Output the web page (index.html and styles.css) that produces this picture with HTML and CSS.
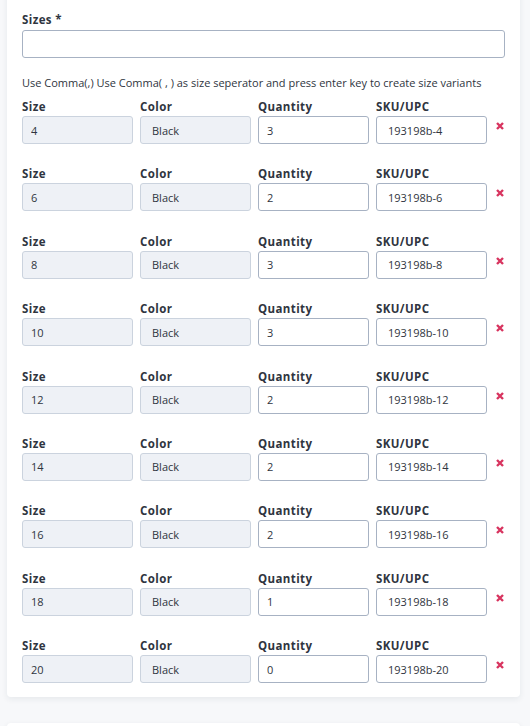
FILE: index.html
```html
<!DOCTYPE html>
<html>
<head>
<meta charset="utf-8">
<link rel="stylesheet" href="styles.css">
</head>
<body>
<div class="card">
  <div class="field">
    <label class="label">Sizes *</label>
    <input class="input sizes" type="text">
  </div>
  <p class="hint">Use Comma(,) Use Comma( , ) as size seperator and press enter key to create size variants</p>

  <div class="variant">
    <div class="col"><label class="label">Size</label><input class="input disabled pad-s" value="4" readonly></div>
    <div class="col"><label class="label">Color</label><input class="input disabled pad-c" value="Black" readonly></div>
    <div class="col"><label class="label">Quantity</label><input class="input pad-s" value="3"></div>
    <div class="col"><label class="label">SKU/UPC</label><input class="input pad-c" value="193198b-4"></div>
    <div class="del"><svg viewBox="0 0 8 8" width="8" height="8"><path d="M1 1L7 7M7 1L1 7" /></svg></div>
  </div>
  <div class="variant">
    <div class="col"><label class="label">Size</label><input class="input disabled pad-s" value="6" readonly></div>
    <div class="col"><label class="label">Color</label><input class="input disabled pad-c" value="Black" readonly></div>
    <div class="col"><label class="label">Quantity</label><input class="input pad-s" value="2"></div>
    <div class="col"><label class="label">SKU/UPC</label><input class="input pad-c" value="193198b-6"></div>
    <div class="del"><svg viewBox="0 0 8 8" width="8" height="8"><path d="M1 1L7 7M7 1L1 7" /></svg></div>
  </div>
  <div class="variant">
    <div class="col"><label class="label">Size</label><input class="input disabled pad-s" value="8" readonly></div>
    <div class="col"><label class="label">Color</label><input class="input disabled pad-c" value="Black" readonly></div>
    <div class="col"><label class="label">Quantity</label><input class="input pad-s" value="3"></div>
    <div class="col"><label class="label">SKU/UPC</label><input class="input pad-c" value="193198b-8"></div>
    <div class="del"><svg viewBox="0 0 8 8" width="8" height="8"><path d="M1 1L7 7M7 1L1 7" /></svg></div>
  </div>
  <div class="variant">
    <div class="col"><label class="label">Size</label><input class="input disabled pad-s" value="10" readonly></div>
    <div class="col"><label class="label">Color</label><input class="input disabled pad-c" value="Black" readonly></div>
    <div class="col"><label class="label">Quantity</label><input class="input pad-s" value="3"></div>
    <div class="col"><label class="label">SKU/UPC</label><input class="input pad-c" value="193198b-10"></div>
    <div class="del"><svg viewBox="0 0 8 8" width="8" height="8"><path d="M1 1L7 7M7 1L1 7" /></svg></div>
  </div>
  <div class="variant">
    <div class="col"><label class="label">Size</label><input class="input disabled pad-s" value="12" readonly></div>
    <div class="col"><label class="label">Color</label><input class="input disabled pad-c" value="Black" readonly></div>
    <div class="col"><label class="label">Quantity</label><input class="input pad-s" value="2"></div>
    <div class="col"><label class="label">SKU/UPC</label><input class="input pad-c" value="193198b-12"></div>
    <div class="del"><svg viewBox="0 0 8 8" width="8" height="8"><path d="M1 1L7 7M7 1L1 7" /></svg></div>
  </div>
  <div class="variant">
    <div class="col"><label class="label">Size</label><input class="input disabled pad-s" value="14" readonly></div>
    <div class="col"><label class="label">Color</label><input class="input disabled pad-c" value="Black" readonly></div>
    <div class="col"><label class="label">Quantity</label><input class="input pad-s" value="2"></div>
    <div class="col"><label class="label">SKU/UPC</label><input class="input pad-c" value="193198b-14"></div>
    <div class="del"><svg viewBox="0 0 8 8" width="8" height="8"><path d="M1 1L7 7M7 1L1 7" /></svg></div>
  </div>
  <div class="variant">
    <div class="col"><label class="label">Size</label><input class="input disabled pad-s" value="16" readonly></div>
    <div class="col"><label class="label">Color</label><input class="input disabled pad-c" value="Black" readonly></div>
    <div class="col"><label class="label">Quantity</label><input class="input pad-s" value="2"></div>
    <div class="col"><label class="label">SKU/UPC</label><input class="input pad-c" value="193198b-16"></div>
    <div class="del"><svg viewBox="0 0 8 8" width="8" height="8"><path d="M1 1L7 7M7 1L1 7" /></svg></div>
  </div>
  <div class="variant">
    <div class="col"><label class="label">Size</label><input class="input disabled pad-s" value="18" readonly></div>
    <div class="col"><label class="label">Color</label><input class="input disabled pad-c" value="Black" readonly></div>
    <div class="col"><label class="label">Quantity</label><input class="input pad-s" value="1"></div>
    <div class="col"><label class="label">SKU/UPC</label><input class="input pad-c" value="193198b-18"></div>
    <div class="del"><svg viewBox="0 0 8 8" width="8" height="8"><path d="M1 1L7 7M7 1L1 7" /></svg></div>
  </div>
  <div class="variant">
    <div class="col"><label class="label">Size</label><input class="input disabled pad-s" value="20" readonly></div>
    <div class="col"><label class="label">Color</label><input class="input disabled pad-c" value="Black" readonly></div>
    <div class="col"><label class="label">Quantity</label><input class="input pad-s" value="0"></div>
    <div class="col"><label class="label">SKU/UPC</label><input class="input pad-c" value="193198b-20"></div>
    <div class="del"><svg viewBox="0 0 8 8" width="8" height="8"><path d="M1 1L7 7M7 1L1 7" /></svg></div>
  </div>
</div>
<div class="card next"></div>
</body>
</html>
```
FILE: styles.css
```css
* { box-sizing: border-box; }
html, body { margin: 0; padding: 0; }
body {
  background: #f7f8fa;
  font-family: "Open Sans", "Liberation Sans", sans-serif;
  color: #2f3540;
  padding: 0 10px 0 7px;
  overflow: hidden;
  height: 726px;
}
.card {
  background: #fff;
  border-radius: 4px;
  box-shadow: 0 2px 6px rgba(30, 45, 70, 0.08);
  margin-top: -10px;
  padding: 22px 15px 14px 15px;
}
.card.next {
  margin-top: 26px;
  height: 100px;
}
.label {
  display: block;
  font-size: 11.5px;
  font-weight: 700;
  line-height: 16px;
  color: #2f3540;
  letter-spacing: 0.4px;
}
.field .label { margin-bottom: 2px; }
.input {
  display: block;
  width: 100%;
  height: 28px;
  border: 1px solid #a7b2c3;
  border-radius: 3px;
  background: #fff;
  font-family: "Open Sans", "Liberation Sans", sans-serif;
  font-size: 11px;
  color: #2f3540;
  padding: 0 8px;
  outline: none;
}
.input.disabled {
  background: #eef1f6;
  border-color: #cbd3de;
}
.pad-s { padding-left: 8px; }
.pad-c { padding-left: 11px; }
.hint {
  margin: 17px 0 8px;
  font-size: 11px;
  line-height: 16px;
  color: #2f3540;
}
.variant {
  display: grid;
  grid-template-columns: 111px 111px 111px 111px 1fr;
  column-gap: 7px;
  margin-bottom: 22.375px;
}
.variant:last-child { margin-bottom: 0; }
.col .label { margin-bottom: 1px; }
.del {
  display: flex;
  justify-content: flex-end;
  padding-top: 23px;
  padding-right: 1px;
}
.del svg path {
  stroke: #d8345f;
  stroke-width: 2.4;
  stroke-linecap: butt;
  fill: none;
}
```
